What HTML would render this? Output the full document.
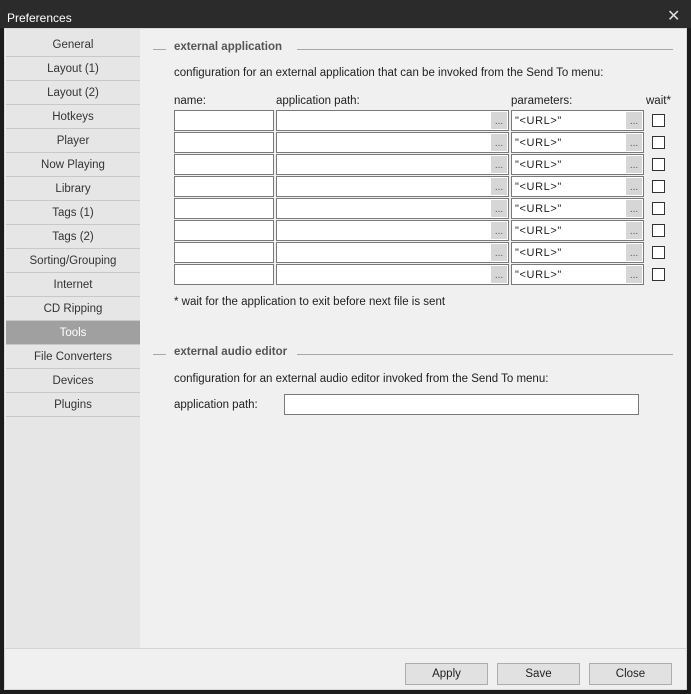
<!DOCTYPE html>
<html><head><meta charset="utf-8"><style>
*{box-sizing:border-box;margin:0;padding:0}
body{width:691px;height:694px;background:#1c1c1c;font-family:"Liberation Sans",sans-serif;font-size:11.5px;color:#1e1e1e;position:relative;overflow:hidden}
.a{position:absolute;white-space:nowrap}
#title{left:0;top:0;width:691px;height:28px;background:#2b2b2b;color:#fff;font-size:12px;padding:11px 0 0 7px}
#x{left:667px;top:6px;color:#ddd;font-size:16px}
#win{left:4px;top:28px;width:683px;height:662px;background:#f0f0f0;border:1px solid #d8d8d8}
#nav{left:6px;top:29px;width:134px;height:620px;background:#e6e6e6}
.n{position:absolute;left:6px;width:134px;height:24px;border-bottom:1px solid #c8c8c8;text-align:center;line-height:24px;color:#333}
.sel{background:#a0a0a0;color:#fff}
#bot{left:5px;top:648px;width:681px;height:1px;background:#d4d4d4}
.btn{position:absolute;top:663px;width:83px;height:22px;border:1px solid #adadad;background:#e1e1e1;text-align:center;line-height:21px;color:#1e1e1e}
.h{font-weight:bold;color:#555}
.ln{position:absolute;height:1px;background:#a8a8a8}
.in{position:absolute;height:21px;background:#fff;border:1px solid #7a7a7a}
.dd{position:absolute;right:1px;top:1px;width:16px;height:17px;background:#d6d6d6;color:#555;font-size:10px;text-align:center;line-height:20px}
.cb{position:absolute;width:13px;height:13px;border:1px solid #333;background:#fff}
.pv{position:absolute;left:3px;top:4px;font-size:11px;letter-spacing:0.6px}
</style></head><body>
<div class="a" id="title">Preferences</div>
<div class="a" id="x">✕</div>
<div class="a" id="win"></div>
<div class="a" id="nav"></div>
<div class="n" style="top:33px">General</div>
<div class="n" style="top:57px">Layout (1)</div>
<div class="n" style="top:81px">Layout (2)</div>
<div class="n" style="top:105px">Hotkeys</div>
<div class="n" style="top:129px">Player</div>
<div class="n" style="top:153px">Now Playing</div>
<div class="n" style="top:177px">Library</div>
<div class="n" style="top:201px">Tags (1)</div>
<div class="n" style="top:225px">Tags (2)</div>
<div class="n" style="top:249px">Sorting/Grouping</div>
<div class="n" style="top:273px">Internet</div>
<div class="n" style="top:297px">CD Ripping</div>
<div class="n sel" style="top:321px">Tools</div>
<div class="n" style="top:345px">File Converters</div>
<div class="n" style="top:369px">Devices</div>
<div class="n" style="top:393px">Plugins</div>
<div class="a" id="bot"></div>
<div class="btn" style="left:405px">Apply</div>
<div class="btn" style="left:497px">Save</div>
<div class="btn" style="left:589px">Close</div>

<div class="ln" style="left:153px;top:49px;width:13px"></div>
<div class="a h" style="left:174px;top:41px">external application</div>
<div class="ln" style="left:297px;top:49px;width:376px"></div>
<div class="a" style="left:174px;top:67px">configuration for an external application that can be invoked from the Send To menu:</div>
<div class="a" style="left:174px;top:95px">name:</div>
<div class="a" style="left:276px;top:95px">application path:</div>
<div class="a" style="left:511px;top:95px">parameters:</div>
<div class="a" style="left:646px;top:95px">wait*</div>
<div id="rows"></div>
<div class="a" style="left:174px;top:296px">* wait for the application to exit before next file is sent</div>

<div class="ln" style="left:153px;top:354px;width:13px"></div>
<div class="a h" style="left:174px;top:346px">external audio editor</div>
<div class="ln" style="left:297px;top:354px;width:376px"></div>
<div class="a" style="left:174px;top:373px">configuration for an external audio editor invoked from the Send To menu:</div>
<div class="a" style="left:174px;top:399px">application path:</div>
<div class="in" style="left:284px;top:394px;width:355px"></div>
<script>
var h='';for(var i=0;i<8;i++){var t=110+22*i;
h+='<div class="in" style="left:174px;top:'+t+'px;width:100px"></div>';
h+='<div class="in" style="left:276px;top:'+t+'px;width:233px"><div class="dd">...</div></div>';
h+='<div class="in" style="left:511px;top:'+t+'px;width:133px"><span class="pv">"&lt;URL&gt;"</span><div class="dd">...</div></div>';
h+='<div class="cb" style="left:652px;top:'+(t+4)+'px"></div>';}
document.getElementById('rows').outerHTML=h;
</script>
</body></html>
